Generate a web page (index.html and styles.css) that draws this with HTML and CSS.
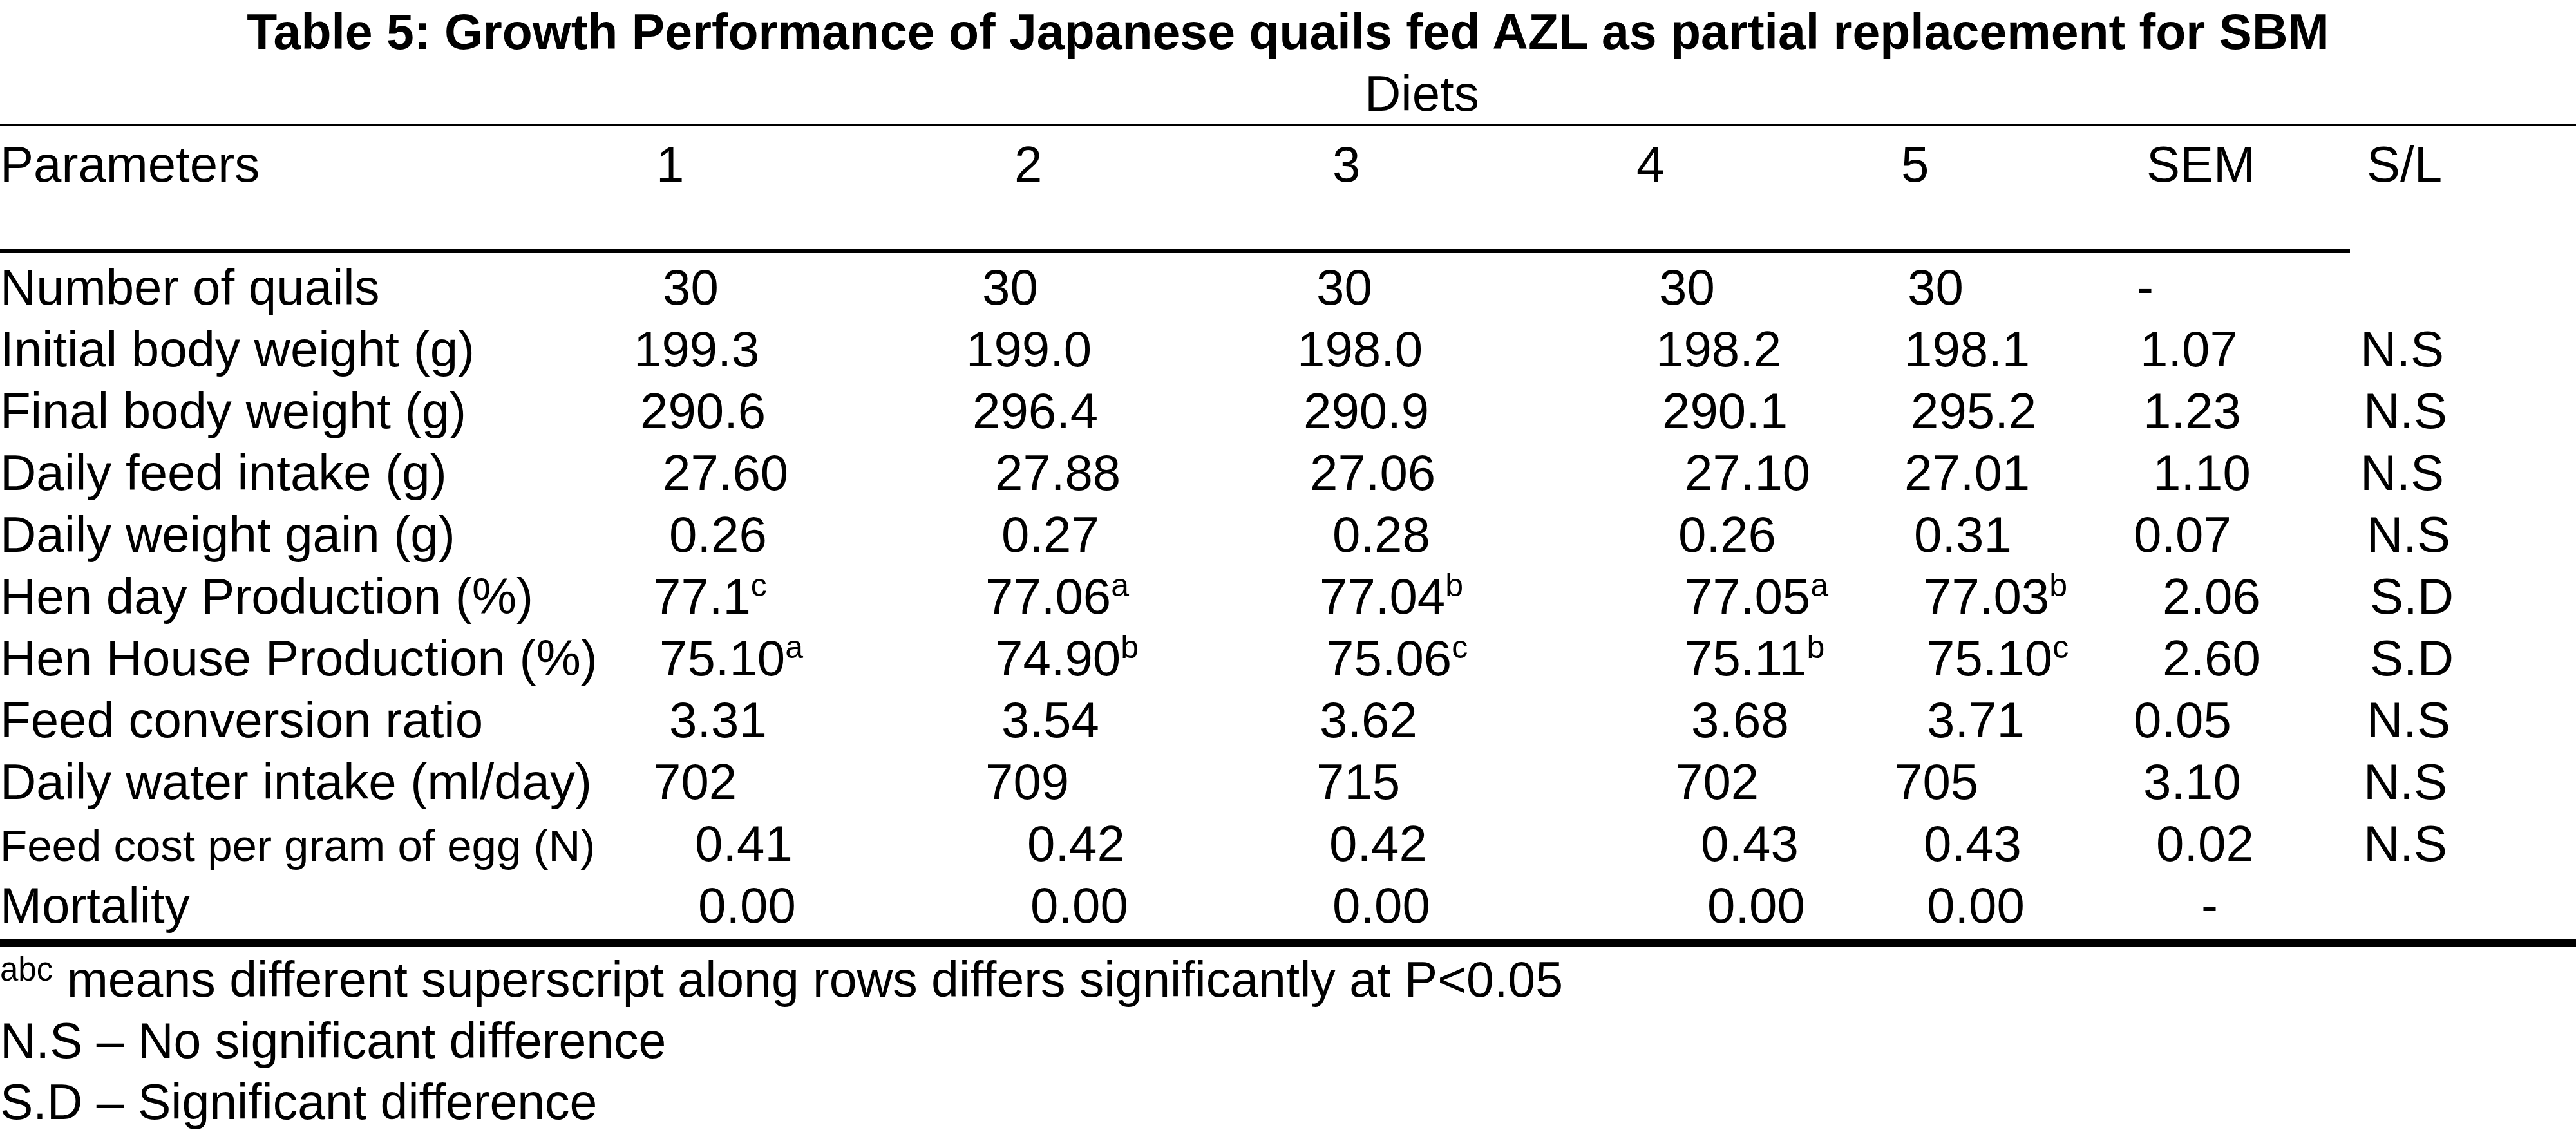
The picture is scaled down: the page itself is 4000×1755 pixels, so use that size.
FILE: index.html
```html
<!DOCTYPE html>
<html lang="en">
<head>
<meta charset="utf-8">
<title>Table 5: Growth Performance of Japanese quails</title>
<link rel="stylesheet" href="styles.css">
</head>
<body>
<div class="doc">
  <h1 class="title">Table 5: Growth Performance of Japanese quails fed AZL as partial replacement for SBM</h1>
  <div class="diets">Diets</div>
  <div class="rule rule-top"></div>
  <div class="thead">
    <div class="row">
      <div>Parameters</div>
      <div class="x35">1</div>
      <div class="x75">2</div>
      <div class="x55">3</div>
      <div>4</div>
      <div class="x10">5</div>
      <div class="x20">SEM</div>
      <div class="x10">S/L</div>
    </div>
  </div>
  <div class="rule rule-mid"></div>
  <div class="tbody">
    <div class="row">
      <div>Number of quails</div>
      <div class="x45">30</div>
      <div class="x25">30</div>
      <div class="x30">30</div>
      <div class="x35">30</div>
      <div class="x20">30</div>
      <div class="x5">-</div>
      <div></div>
    </div>
    <div class="row">
      <div>Initial body weight (g)</div>
      <div>199.3</div>
      <div>199.0</div>
      <div>198.0</div>
      <div class="x30">198.2</div>
      <div class="x15">198.1</div>
      <div class="x10">1.07</div>
      <div>N.S</div>
    </div>
    <div class="row">
      <div>Final body weight (g)</div>
      <div class="x10">290.6</div>
      <div class="x10">296.4</div>
      <div class="x10">290.9</div>
      <div class="x40">290.1</div>
      <div class="x25">295.2</div>
      <div class="x15">1.23</div>
      <div class="x5">N.S</div>
    </div>
    <div class="row">
      <div>Daily feed intake (g)</div>
      <div class="x45">27.60</div>
      <div class="x45">27.88</div>
      <div class="x20">27.06</div>
      <div class="x75">27.10</div>
      <div class="x15">27.01</div>
      <div class="x30">1.10</div>
      <div>N.S</div>
    </div>
    <div class="row">
      <div>Daily weight gain (g)</div>
      <div class="x55">0.26</div>
      <div class="x55">0.27</div>
      <div class="x55">0.28</div>
      <div class="x65">0.26</div>
      <div class="x30">0.31</div>
      <div>0.07</div>
      <div class="x10">N.S</div>
    </div>
    <div class="row">
      <div>Hen day Production (%)</div>
      <div class="x30">77.1<sup>c</sup></div>
      <div class="x30">77.06<sup>a</sup></div>
      <div class="x35">77.04<sup>b</sup></div>
      <div class="x75">77.05<sup>a</sup></div>
      <div class="x45">77.03<sup>b</sup></div>
      <div class="x45">2.06</div>
      <div class="x15">S.D</div>
    </div>
    <div class="row">
      <div>Hen House Production (%)</div>
      <div class="x40">75.10<sup>a</sup></div>
      <div class="x45">74.90<sup>b</sup></div>
      <div class="x45">75.06<sup>c</sup></div>
      <div class="x75">75.11<sup>b</sup></div>
      <div class="x50">75.10<sup>c</sup></div>
      <div class="x45">2.60</div>
      <div class="x15">S.D</div>
    </div>
    <div class="row">
      <div>Feed conversion ratio</div>
      <div class="x55">3.31</div>
      <div class="x55">3.54</div>
      <div class="x35">3.62</div>
      <div class="x85">3.68</div>
      <div class="x50">3.71</div>
      <div>0.05</div>
      <div class="x10">N.S</div>
    </div>
    <div class="row">
      <div>Daily water intake (ml/day)</div>
      <div class="x30">702</div>
      <div class="x30">709</div>
      <div class="x30">715</div>
      <div class="x60">702</div>
      <div>705</div>
      <div class="x15">3.10</div>
      <div class="x5">N.S</div>
    </div>
    <div class="row">
      <div class="small">Feed cost per gram of egg (N)</div>
      <div class="x95">0.41</div>
      <div class="x95">0.42</div>
      <div class="x50">0.42</div>
      <div class="x100">0.43</div>
      <div class="x45">0.43</div>
      <div class="x35">0.02</div>
      <div class="x5">N.S</div>
    </div>
    <div class="row">
      <div>Mortality</div>
      <div class="x100">0.00</div>
      <div class="x100">0.00</div>
      <div class="x55">0.00</div>
      <div class="x110">0.00</div>
      <div class="x50">0.00</div>
      <div class="x105">-</div>
      <div></div>
    </div>
  </div>
  <div class="rule rule-bottom"></div>
  <div class="notes">
    <p><sup>abc</sup> means different superscript along rows differs significantly at P&lt;0.05</p>
    <p>N.S &ndash; No significant difference</p>
    <p>S.D &ndash; Significant difference</p>
  </div>
</div>
</body>
</html>
```
FILE: styles.css
```css
html, body {
  margin: 0;
  padding: 0;
  background: #ffffff;
}

body {
  font-family: "Liberation Sans", Arial, sans-serif;
  color: #000000;
}

.doc {
  width: 4000px;
}

.title {
  margin: 0;
  font-size: 77px;
  font-weight: bold;
  line-height: 98px;
  text-align: center;
  white-space: nowrap;
}

.diets {
  font-size: 78px;
  line-height: 94px;
  padding-left: 2119px;
}

.rule {
  background: #000000;
}

.rule-top {
  height: 4px;
}

.rule-mid {
  height: 6px;
  width: 3649px;
}

.rule-bottom {
  height: 12px;
}

.thead {
  padding: 11px 0 84px;
}

.tbody {
  padding: 5px 0;
}

.row {
  display: grid;
  grid-template-columns: 984px 516px 514px 527px 401px 371px 352px 335px;
  height: 96px;
  align-items: baseline;
  font-size: 78px;
  line-height: 96px;
  white-space: nowrap;
}

.row .small {
  font-size: 69px;
}

sup {
  font-size: 50px;
  line-height: 0;
  vertical-align: 27px;
}

.notes {
  padding-top: 3px;
  font-size: 77px;
  line-height: 95px;
}

.notes p {
  margin: 0;
  white-space: nowrap;
}

.notes sup {
  font-size: 51px;
  vertical-align: 25px;
}

.x5 { padding-left: 5px; }
.x10 { padding-left: 10px; }
.x15 { padding-left: 15px; }
.x20 { padding-left: 20px; }
.x25 { padding-left: 25px; }
.x30 { padding-left: 30px; }
.x35 { padding-left: 35px; }
.x40 { padding-left: 40px; }
.x45 { padding-left: 45px; }
.x50 { padding-left: 50px; }
.x55 { padding-left: 55px; }
.x60 { padding-left: 60px; }
.x65 { padding-left: 65px; }
.x75 { padding-left: 75px; }
.x85 { padding-left: 85px; }
.x95 { padding-left: 95px; }
.x100 { padding-left: 100px; }
.x105 { padding-left: 105px; }
.x110 { padding-left: 110px; }
```
